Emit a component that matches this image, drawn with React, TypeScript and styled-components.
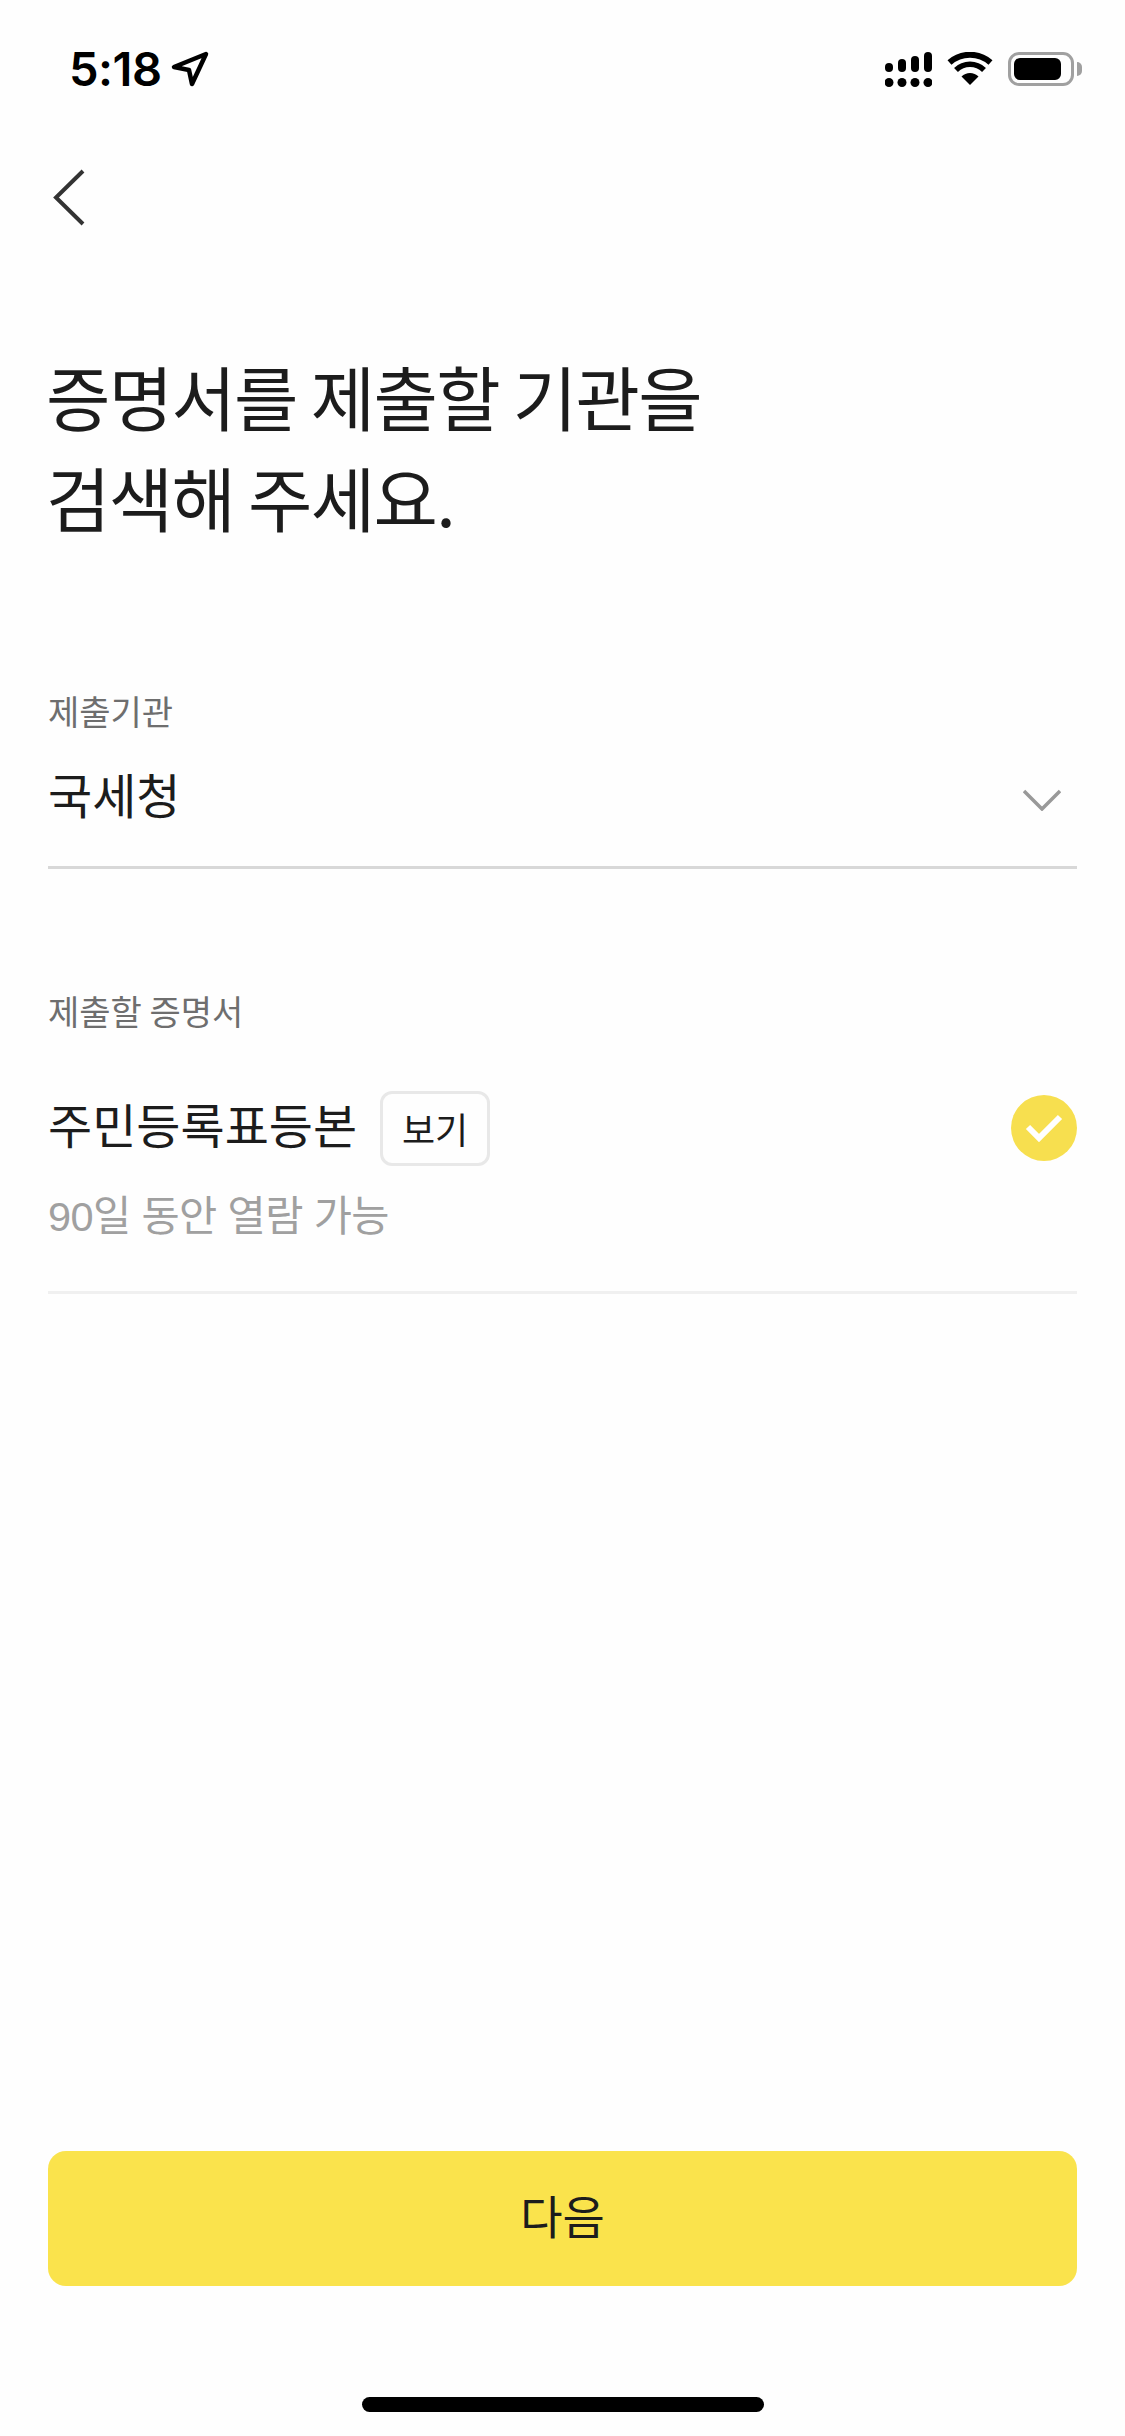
import styled, { createGlobalStyle } from "styled-components";

const GlobalStyle = createGlobalStyle`
  html, body {
    margin: 0;
    padding: 0;
    background-color: #fefefe;
  }
  * {
    box-sizing: border-box;
  }
`;

const Screen = styled.div`
  width: 1125px;
  height: 2436px;
  display: flex;
  flex-direction: column;
  overflow: hidden;
  background-color: #fefefe;
  color: #1c1c1c;
  font-family: "Noto Sans CJK KR", "Liberation Sans", sans-serif;
`;

const StatusBar = styled.div`
  height: 132px;
  padding: 52px 44px 0 69px;
  display: flex;
  justify-content: space-between;
  align-items: flex-start;
`;

const TimeGroup = styled.div`
  display: flex;
  align-items: center;
  gap: 9px;
  height: 34px;
`;

const Time = styled.span`
  font-family: Inter, "Liberation Sans", sans-serif;
  font-size: 47px;
  font-weight: 600;
  line-height: 34px;
  letter-spacing: -0.5px;
  color: #000;
`;

const StatusIcons = styled.div`
  display: flex;
  align-items: flex-start;
  gap: 15px;
`;

const Battery = styled.div`
  position: relative;
  width: 66px;
  height: 34px;
  padding: 3px;
  border: 3px solid #a0a0a0;
  border-radius: 11px;
  margin-right: 7px;
  &::after {
    content: "";
    position: absolute;
    right: -11px;
    top: 7px;
    width: 5px;
    height: 14px;
    border-radius: 0 5px 5px 0;
    background-color: #a0a0a0;
  }
`;

const BatteryLevel = styled.div`
  width: 47px;
  height: 22px;
  border-radius: 6px;
  background-color: #000;
`;

const BackButton = styled.button`
  display: block;
  width: 40px;
  height: 60px;
  margin: 36px 0 0 48px;
  padding: 0;
  border: none;
  background: none;
`;

const Heading = styled.h1`
  margin: 117px 0 0;
  padding: 0 46px;
  font-size: 70px;
  font-weight: 400;
  line-height: 101px;
  letter-spacing: -1.7px;
`;

const Field = styled.section<{ $top: number }>`
  margin: ${(p) => p.$top}px 48px 0;
`;

const FieldLabel = styled.div`
  font-size: 34px;
  line-height: 44px;
  color: #6e6e6e;
`;

const SelectRow = styled.div`
  display: flex;
  justify-content: space-between;
  align-items: center;
  height: 74px;
  margin: 23px 0 36px;
  padding-right: 16px;
  font-size: 48px;
  svg {
    margin-top: 14px;
  }
`;

const Divider = styled.div<{ $color: string }>`
  height: 3px;
  background-color: ${(p) => p.$color};
`;

const DocRow = styled.div`
  display: flex;
  align-items: center;
  height: 76px;
  margin-top: 57px;
`;

const DocName = styled.span`
  font-size: 48px;
  line-height: 64px;
  margin-right: 23px;
  padding-bottom: 10px;
`;

const ViewButton = styled.button`
  width: 110px;
  height: 75px;
  padding: 0;
  border: 3px solid #e8e8e8;
  border-radius: 12px;
  background-color: #fefefe;
  color: #1c1c1c;
  font-family: inherit;
  font-size: 36px;
`;

const CheckCircle = styled.div`
  width: 66px;
  height: 66px;
  margin-left: auto;
  border-radius: 50%;
  background-color: #f7df4f;
  display: flex;
  align-items: center;
  justify-content: center;
`;

const DocNote = styled.div`
  margin: 23px 0 46px;
  font-family: "Liberation Sans", "Noto Sans CJK KR", sans-serif;
  font-size: 41.5px;
  line-height: 56px;
  letter-spacing: -0.6px;
  color: #a0a0a0;
`;

const NextButton = styled.button`
  display: block;
  width: 1029px;
  height: 135px;
  margin: auto 48px 0;
  padding: 0 0 10px;
  border: none;
  border-radius: 18px;
  background-color: #fae34c;
  color: #1c1c1c;
  font-family: inherit;
  font-size: 46px;
`;

const HomeIndicator = styled.div`
  width: 402px;
  height: 15px;
  margin: 111px 0 24px 362px;
  border-radius: 8px;
  background-color: #000;
`;

const App = () => {
  return (
    <Screen>
      <GlobalStyle />
      <StatusBar>
        <TimeGroup>
          <Time>5:18</Time>
          <svg width="38" height="36" viewBox="0 0 38 36" fill="none">
            <path
              d="M35 3 L3 16 L18 19 L21 33 Z"
              stroke="#000"
              strokeWidth="4.5"
              strokeLinejoin="round"
            />
          </svg>
        </TimeGroup>
        <StatusIcons>
          <svg width="47" height="35" viewBox="0 0 47 35" fill="#000">
            <rect x="0" y="11" width="8" height="9" rx="4" />
            <rect x="13" y="7" width="8" height="13" rx="4" />
            <rect x="26" y="4" width="8" height="16" rx="4" />
            <rect x="39" y="0" width="8" height="20" rx="4" />
            <circle cx="4" cy="30.5" r="4.5" />
            <circle cx="17" cy="30.5" r="4.5" />
            <circle cx="30" cy="30.5" r="4.5" />
            <circle cx="43" cy="30.5" r="4.5" />
          </svg>
          <svg width="46" height="33" viewBox="0 0 46 33" fill="none">
            <path d="M2.5 10.5 A31 31 0 0 1 43.5 10.5" stroke="#000" strokeWidth="6" />
            <path d="M9 18 A20 20 0 0 1 37 18" stroke="#000" strokeWidth="5.5" />
            <path d="M14.5 24.5 A12 12 0 0 1 31.5 24.5 L23 33 Z" fill="#000" />
          </svg>
          <Battery>
            <BatteryLevel />
          </Battery>
        </StatusIcons>
      </StatusBar>

      <BackButton aria-label="back">
        <svg width="34" height="60" viewBox="0 0 34 60" fill="none">
          <path d="M32 3 L5 29.5 L32 56" stroke="#333" strokeWidth="4" />
        </svg>
      </BackButton>

      <Heading>
        증명서를 제출할 기관을
        <br />
        검색해 주세요.
      </Heading>

      <Field $top={142}>
        <FieldLabel>제출기관</FieldLabel>
        <SelectRow>
          국세청
          <svg width="38" height="22" viewBox="0 0 38 22" fill="none">
            <path d="M1 2 L19 20 L37 2" stroke="#999" strokeWidth="3.5" />
          </svg>
        </SelectRow>
        <Divider $color="#d8d8d8" />
      </Field>

      <Field $top={120}>
        <FieldLabel>제출할 증명서</FieldLabel>
        <DocRow>
          <DocName>주민등록표등본</DocName>
          <ViewButton>보기</ViewButton>
          <CheckCircle>
            <svg width="38" height="28" viewBox="0 0 38 28" fill="none">
              <path d="M3 13 L14 24 L35 3" stroke="#fff" strokeWidth="6" />
            </svg>
          </CheckCircle>
        </DocRow>
        <DocNote>90일 동안 열람 가능</DocNote>
        <Divider $color="#f0f0f0" />
      </Field>

      <NextButton>다음</NextButton>
      <HomeIndicator />
    </Screen>
  );
};

export default App;
